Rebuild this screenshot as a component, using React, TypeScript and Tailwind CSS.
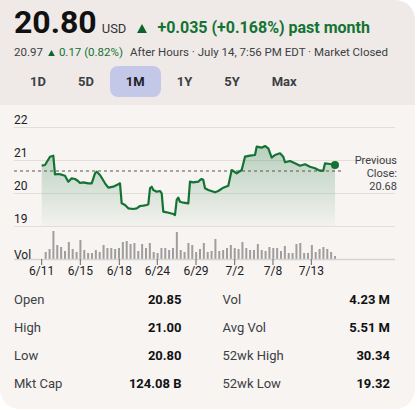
import React from "react";

const GREEN = "#137333";

// price path, traced in page coordinates (svg viewBox starts at y=105)
const linePts: [number, number][] = [
  [41.7, 165.7], [45, 165], [50, 156.7], [53.3, 155.7], [55, 174.3], [58.3, 174],
  [61.7, 174.7], [65, 175.7], [68.3, 181.7], [71.7, 178.3], [75, 179], [78, 181],
  [80, 183], [83.3, 182.3], [88.3, 183.3], [91.7, 183.3], [95, 173.3], [96.7, 171.7],
  [100, 175], [105, 183.3], [108.3, 187.7], [113.3, 186.7], [118.3, 184.3], [120, 183.3],
  [121.7, 203.3], [125, 205], [128.3, 208.3], [133.3, 209], [136.7, 208.3], [140, 206],
  [143.3, 205.7], [146.7, 205], [148.3, 204.3], [150, 188.3], [151.7, 186.7], [153.3, 190],
  [156.7, 191.7], [160, 191], [161.7, 193.3], [163.3, 211.7], [166.7, 212.3], [173.3, 214],
  [175, 215], [176.7, 200], [178.3, 197.7], [180, 201.7], [183.3, 202.7], [188.3, 203.3],
  [190, 181.7], [193.3, 182.3], [198.3, 181.7], [200, 180], [201.7, 179], [203.3, 180],
  [205, 188.3], [208.3, 190], [215, 192.3], [218.3, 191], [223.3, 187.7], [228.3, 185.7],
  [231.7, 170], [236.7, 173.3], [241.7, 170], [245, 156.7], [250, 155.7], [255, 155],
  [256.7, 146.7], [261.7, 147.7], [265, 146], [268.3, 148.3], [271.7, 157.7], [275, 155],
  [280, 153.3], [283.3, 156.7], [285, 162.3], [290, 161], [295, 163.3], [300, 165.7],
  [305, 164.3], [310, 166.7], [315, 168.3], [320, 170.7], [323.3, 170.7], [325, 163.3],
  [330, 164], [335, 165],
];

const volHeights = [
  7, 10, 28, 14, 12, 8, 17, 10, 7, 19, 9, 6, 6, 9, 7, 14, 11, 11, 10, 11, 17, 18, 15, 16,
  8, 15, 11, 16, 7, 6, 11, 11, 9, 11, 27, 9, 7, 16, 14, 7, 10, 16, 7,
  8, 20, 8, 9, 11, 14, 11, 10, 17, 11, 9, 9, 15, 9, 8, 12, 11, 11, 8, 13, 6, 6, 15, 16,
  6, 6, 14, 7, 10, 12, 10, 7, 3,
];

const xTicks: [number, string][] = [
  [41.7, "6/11"], [80.3, "6/15"], [119.3, "6/18"], [157.3, "6/24"],
  [196, "6/29"], [234.7, "7/2"], [273, "7/8"], [311.3, "7/13"],
];

const yGrid: [number, string][] = [
  [127.5, "22"], [160.5, "21"], [193.5, "20"], [226.5, "19"],
];

const ranges = ["1D", "5D", "1M", "1Y", "5Y", "Max"];

const stats: [string, string, string, string][] = [
  ["Open", "20.85", "Vol", "4.23 M"],
  ["High", "21.00", "Avg Vol", "5.51 M"],
  ["Low", "20.80", "52wk High", "30.34"],
  ["Mkt Cap", "124.08 B", "52wk Low", "19.32"],
];

function UpArrow({ size }: { size: number }) {
  return (
    <svg width={size} height={size * 0.9} viewBox="0 0 10 9" className="inline-block">
      <path d="M5 0 L10 9 L0 9 Z" fill="#0d652d" />
    </svg>
  );
}

function PriceChart() {
  const line = linePts.map(([x, y], i) => `${i ? "L" : "M"}${x} ${y}`).join(" ");
  const area = `${line} L335 226 L41.7 226 Z`;
  const step = (335 - 45.7) / (volHeights.length - 1);

  return (
    <svg width="415" height="178" viewBox="0 105 415 178" className="block">
      <defs>
        <linearGradient id="fill" x1="0" y1="0" x2="0" y2="1">
          <stop offset="0%" stopColor={GREEN} stopOpacity="0.28" />
          <stop offset="100%" stopColor={GREEN} stopOpacity="0.02" />
        </linearGradient>
      </defs>

      {yGrid.map(([y, label]) => (
        <g key={label}>
          <line x1="14" x2="395" y1={y} y2={y} stroke="#e2dedb" strokeWidth="1" />
          <text x="14" y={y - 4} fontSize="12" fill="#202124" fontFamily="Roboto, sans-serif">
            {label}
          </text>
        </g>
      ))}

      <path d={area} fill="url(#fill)" />
      <line x1="14" x2="341" y1="171" y2="171" stroke="#555" strokeWidth="1" strokeDasharray="3 3" />
      <path d={line} fill="none" stroke={GREEN} strokeWidth="2.2" strokeLinejoin="round" />
      <circle cx="335" cy="165" r="4" fill={GREEN} />

      <text fontSize="11" fill="#3c4043" textAnchor="end" fontFamily="Roboto, sans-serif">
        <tspan x="397" y="164">Previous</tspan>
        <tspan x="397" y="177">Close:</tspan>
        <tspan x="397" y="190">20.68</tspan>
      </text>

      {volHeights.map((h, i) => (
        <rect key={i} x={45.7 + i * step - 1} y={259 - h} width="2" height={h} fill="#9e9e9e" />
      ))}
      <line x1="14" x2="395" y1="259.5" y2="259.5" stroke="#d6d2cf" strokeWidth="1.5" />
      <text x="14" y="259" fontSize="12" fill="#202124" fontFamily="Roboto, sans-serif">
        Vol
      </text>

      {xTicks.map(([x, label]) => (
        <g key={label}>
          <line x1={x} x2={x} y1="259" y2="265" stroke="#666" strokeWidth="1" />
          <text x={x} y="275" fontSize="12" fill="#202124" textAnchor="middle" fontFamily="Roboto, sans-serif">
            {label}
          </text>
        </g>
      ))}
    </svg>
  );
}

export default function App() {
  return (
    <div className="min-h-[410px] bg-white font-['Roboto',sans-serif]">
      <div className="w-[415px] overflow-hidden rounded-tr-[20px] rounded-br-[20px] rounded-bl-[20px] bg-[#f7f4f2]">
        {/* ── Header: price / after hours / ranges ─────────────── */}
        <div className="bg-[#efeae8] px-[14px] pt-[5px] pb-[8px]">
          <div className="flex items-baseline whitespace-nowrap">
            <span className="text-[32px] font-bold leading-[34px] text-[#111]">20.80</span>
            <span className="ml-[5px] text-[13px] text-[#333]">USD</span>
            <span className="ml-[11px] flex items-baseline gap-[10px] text-[16px] font-bold text-[#137333]">
              <UpArrow size={10} />
              <span>+0.035 (+0.168%) past month</span>
            </span>
          </div>
          <div className="mt-[4px] flex items-baseline whitespace-nowrap text-[11.5px] leading-[16px] text-[#3c4043]">
            <span>20.97</span>
            <span className="ml-[5px] mr-[4px]">
              <UpArrow size={7} />
            </span>
            <span className="text-[#137333]">0.17 (0.82%)</span>
            <span className="ml-[7px]">After Hours · July 14, 7:56 PM EDT · Market Closed</span>
          </div>
          <div className="mt-[6px] flex">
            {ranges.map((r) => (
              <div
                key={r}
                className={
                  r === "1M"
                    ? "flex h-[31px] items-center rounded-[8px] bg-[#c3c8e8] px-4 text-[13px] font-bold text-[#202124]"
                    : "flex h-[31px] items-center px-4 text-[13px] font-bold text-[#3c4043]"
                }
              >
                {r}
              </div>
            ))}
          </div>
        </div>

        {/* ── Chart ───────────────────────────────────────────── */}
        <PriceChart />

        {/* ── Stats ───────────────────────────────────────────── */}
        <div className="grid grid-cols-2 gap-x-[41px] pl-[14px] pr-[25px] pt-[3px] pb-[11px]">
          {stats.map(([l1, v1, l2, v2]) => (
            <React.Fragment key={l1}>
              <div className="flex h-[28px] items-center justify-between text-[13px]">
                <span className="text-[#3c4043]">{l1}</span>
                <span className="font-bold text-[#111]">{v1}</span>
              </div>
              <div className="flex h-[28px] items-center justify-between text-[13px]">
                <span className="text-[#3c4043]">{l2}</span>
                <span className="font-bold text-[#111]">{v2}</span>
              </div>
            </React.Fragment>
          ))}
        </div>
      </div>
    </div>
  );
}
